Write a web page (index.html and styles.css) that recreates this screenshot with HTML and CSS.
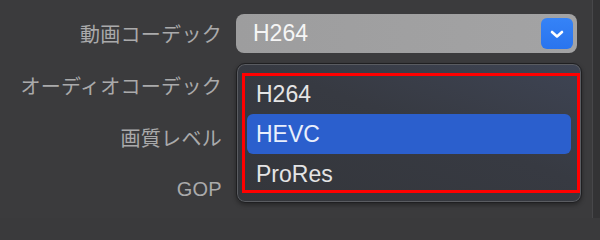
FILE: index.html
```html
<!DOCTYPE html>
<html lang="ja">
<head>
<meta charset="utf-8">
<link rel="stylesheet" href="styles.css">
</head>
<body>
<div class="window">
  <div class="pane">
    <div class="form">
      <div class="label">動画コーデック</div>
      <div class="control">
        <div class="popup">
          <span class="popup-text">H264</span>
          <span class="chevron">
            <svg width="14" height="9" viewBox="0 0 14 9"><path d="M2 2 L7 6.5 L12 2" fill="none" stroke="#fff" stroke-width="2.6" stroke-linecap="round" stroke-linejoin="round"/></svg>
          </span>
        </div>
      </div>
      <div class="label">オーディオコーデック</div>
      <div class="control menu-anchor">
        <div class="menu">
          <div class="item">H264</div>
          <div class="item selected">HEVC</div>
          <div class="item">ProRes</div>
          <div class="annot"></div>
        </div>
      </div>
      <div class="label">画質レベル</div>
      <div class="control"></div>
      <div class="label">GOP</div>
      <div class="control"></div>
    </div>
  </div>
  <div class="edge"></div>
</div>
</body>
</html>
```
FILE: styles.css
```css
html, body {
  margin: 0;
  padding: 0;
  width: 600px;
  height: 218px;
  overflow: hidden;
  background: #3a3a3c;
}
.window {
  display: flex;
  height: 218px;
}
.pane {
  flex: 1;
  background: #3b3b3d;
}
.edge {
  width: 7px;
  border-left: 1px solid #47474a;
  background: #333335;
}
.form {
  display: grid;
  grid-template-columns: 222px 341px;
  grid-auto-rows: 52px;
  column-gap: 14px;
  padding-top: 7px;
}
.label {
  font-family: "Liberation Sans", "Noto Sans CJK JP", sans-serif;
  font-size: 20px;
  color: #aaaaab;
  text-align: right;
  display: flex;
  align-items: center;
  justify-content: flex-end;
  white-space: nowrap;
  letter-spacing: 0.3px;
}
.control {
  display: flex;
  align-items: center;
}
.popup {
  width: 341px;
  height: 39px;
  margin-top: 1px;
  box-sizing: border-box;
  border-radius: 8px;
  background: linear-gradient(90deg, #9d9d9e, #a3a3a4);
  display: flex;
  align-items: center;
  justify-content: space-between;
  padding: 0 4px 0 17px;
}
.popup-text {
  font-family: "Liberation Sans", Arial, sans-serif;
  font-size: 23px;
  color: #f5f5f5;
}
.chevron {
  width: 32px;
  height: 31px;
  border-radius: 6px;
  background: linear-gradient(#3583f7, #2a74ee);
  display: flex;
  align-items: center;
  justify-content: center;
}
.chevron svg { display: block; margin-top: 1px; }
.menu-anchor {
  position: relative;
}
.menu {
  position: absolute;
  left: 0;
  top: 4px;
  width: 346px;
  height: 140px;
  box-sizing: border-box;
  border-radius: 9px;
  border: 1px solid #1f1f21;
  box-shadow: inset 0 0 0 1px #5a5c61, 0 2px 4px rgba(0,0,0,0.35);
  background: linear-gradient(200deg, #3e4454 0%, #373a42 45%, #34363b 100%);
  padding: 10px 10px 0 10px;
  z-index: 2;
}
.item {
  height: 40px;
  border-radius: 6px;
  display: flex;
  align-items: center;
  padding-left: 9px;
  font-family: "Liberation Sans", Arial, sans-serif;
  font-size: 23px;
  color: #e4e4e5;
}
.item.selected {
  background: #2b5fcd;
  color: #e9effc;
}
.annot {
  position: absolute;
  left: 5px;
  top: 9px;
  width: 338px;
  height: 120px;
  box-sizing: border-box;
  border: 3px solid #ff0000;
}
```
